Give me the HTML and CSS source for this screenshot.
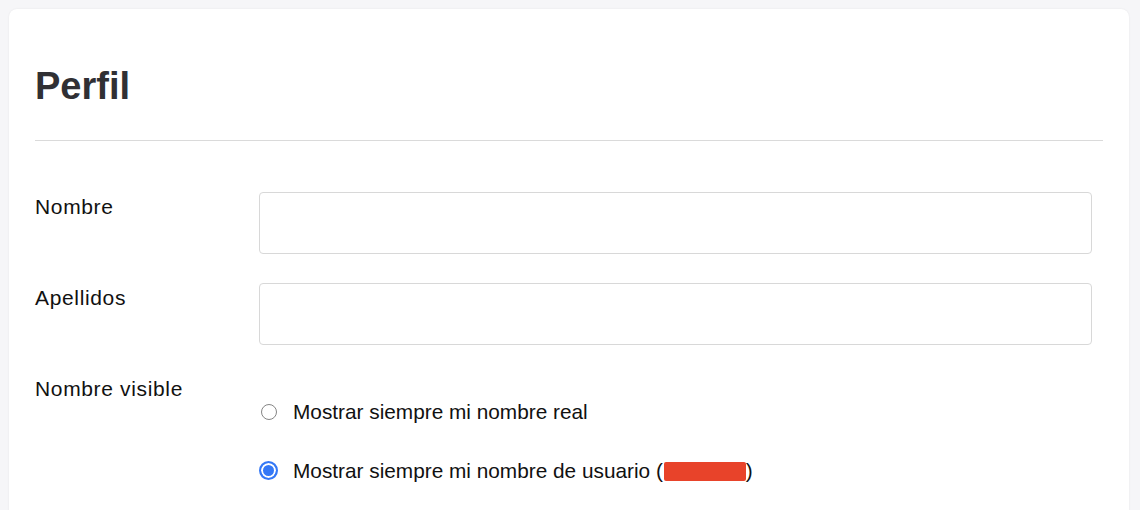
FILE: index.html
```html
<!DOCTYPE html>
<html lang="es">
<head>
<meta charset="utf-8">
<title>Perfil</title>
<link rel="stylesheet" href="styles.css">
</head>
<body>
<main class="card">
  <h1 class="title">Perfil</h1>
  <hr class="divider">
  <form class="form">
    <label class="label" for="nombre">Nombre</label>
    <input class="input" id="nombre" type="text">
    <label class="label" for="apellidos">Apellidos</label>
    <input class="input" id="apellidos" type="text">
    <span class="label">Nombre visible</span>
    <div class="options">
      <label class="option">
        <span class="radio-box"><span class="radio"></span></span>
        <span>Mostrar siempre mi nombre real</span>
      </label>
      <label class="option">
        <span class="radio-box"><span class="radio checked"></span></span>
        <span>Mostrar siempre mi nombre de usuario (<span class="redact"></span>)</span>
      </label>
    </div>
  </form>
</main>
</body>
</html>
```

FILE: styles.css
```css
html, body {
  margin: 0;
  padding: 0;
}
body {
  background: #f6f6f8;
  font-family: "Liberation Sans", Arial, Helvetica, sans-serif;
  color: #111;
  padding: 9px 11px 0 9px;
  height: 510px;
  box-sizing: border-box;
  overflow: hidden;
}
.card {
  background: #fff;
  border-radius: 8px;
  box-shadow: 0 0 2px rgba(0, 0, 0, 0.08);
  padding: 55px 26px 40px 26px;
  min-height: 600px;
}
.title {
  margin: 0;
  font-size: 38px;
  line-height: 45.6px;
  font-weight: 700;
  color: #303034;
}
.divider {
  margin: 30px 0 0 0;
  border: 0;
  border-top: 1px solid #dadada;
  height: 0;
}
.form {
  display: grid;
  grid-template-columns: 224px 1fr;
  row-gap: 29px;
  margin-top: 51px;
  margin-right: 11px;
  font-size: 21px;
  line-height: 30px;
}
.label {
  color: #111;
  letter-spacing: 0.65px;
}
.input {
  height: 62px;
  box-sizing: border-box;
  border: 1px solid #d8d8d8;
  border-radius: 4px;
  background: #fff;
  margin: 0;
  font: inherit;
  padding: 0 12px;
}
.options {
  display: flex;
  flex-direction: column;
  gap: 29px;
  padding-top: 23px;
}
.option {
  display: flex;
  align-items: center;
  gap: 15px;
  color: #111;
  font-size: 20.8px;
  letter-spacing: 0;
}
.radio-box {
  width: 19px;
  height: 19px;
  display: flex;
  align-items: center;
  justify-content: center;
  flex: none;
}
.radio {
  width: 16px;
  height: 16px;
  border: 1.2px solid #858585;
  border-radius: 50%;
  box-sizing: border-box;
  background: #fff;
}
.radio.checked {
  border: 2px solid #3478f6;
  background: #3478f6;
  box-shadow: inset 0 0 0 2px #fff;
  width: 19px;
  height: 19px;
}
.redact {
  display: inline-block;
  background: #e8432a;
  height: 19px;
  width: 82px;
  vertical-align: -3px;
  border-radius: 2px;
  margin-left: 1px;
}
```
